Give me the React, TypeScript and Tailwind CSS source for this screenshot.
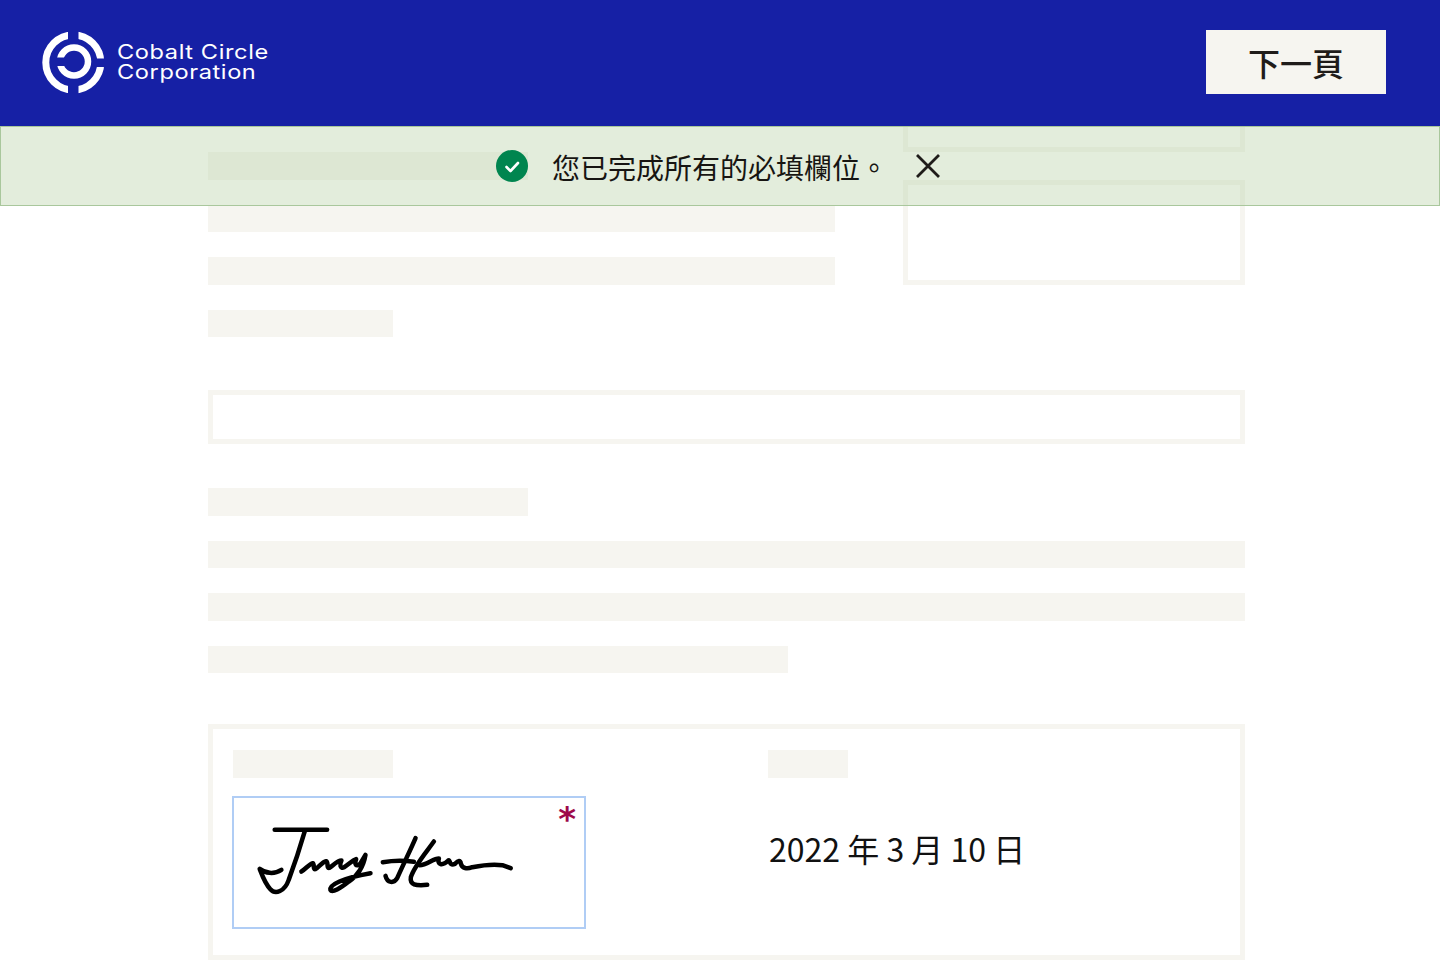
const cjk = "font-['Noto_Sans_CJK_TC','Noto_Sans',sans-serif]";

function Logo() {
  return (
    <svg width="64" height="64" viewBox="0 0 64 64" fill="none" className="shrink-0">
      <circle cx="32.3" cy="32.5" r="27.5" stroke="#ffffff" strokeWidth="7" />
      <rect x="27" y="0" width="10.5" height="12" fill="#1620a5" />
      <rect x="27" y="52" width="10.5" height="12" fill="#1620a5" />
      <rect x="50" y="28.5" width="14" height="8.5" fill="#1620a5" />
      <circle cx="33" cy="31.5" r="14" stroke="#ffffff" strokeWidth="6.5" />
      <rect x="12" y="27.5" width="22" height="8.5" fill="#1620a5" />
    </svg>
  );
}

function Signature() {
  return (
    <svg width="267" height="77" viewBox="80 100 800 230" fill="none" stroke="#000000" strokeWidth="13.5" strokeLinecap="round" strokeLinejoin="round">
      <path d="M148 120 H305" />
      <path d="M238 125 C225 170 205 230 190 270 C178 305 150 315 135 298 C118 280 110 255 103 237 C120 250 145 255 168 240" />
      <path d="M228 245 C240 238 252 222 262 220 C268 222 262 240 270 238 C280 232 290 216 302 214 C310 216 302 236 312 234 C322 228 335 212 348 212 C342 224 344 238 356 232 C370 224 380 212 392 208 C386 224 392 232 404 222 L420 195 C415 225 400 255 370 275 C345 295 320 310 315 300 C312 285 350 265 435 250" />
      <path d="M472 217 C500 212 530 210 565 216" />
      <path d="M570 145 C555 180 535 220 515 265 C505 282 485 280 480 258" />
      <path d="M625 155 C600 190 565 230 556 262 C552 285 570 288 605 285" />
      <path d="M582 226 C605 226 622 206 640 206 C634 224 650 230 668 212 C674 208 670 230 688 222 C698 212 704 210 706 222 C710 236 724 238 740 232 C770 226 800 222 830 226 L855 235" />
    </svg>
  );
}

function Bar({ className }: { className: string }) {
  return <div className={`h-[27.5px] bg-[#f6f5f0] ${className}`} />;
}

export default function App() {
  return (
    <div className={`relative h-[960px] overflow-hidden bg-white ${cjk}`}>
      <header className="flex h-[126px] items-center justify-between bg-[#1620a5] pb-0.5 pl-[41px] pr-[54px]">
        <div className="flex items-center gap-3">
          <Logo />
          <div className="mb-px origin-left scale-x-[1.18] font-['Inter',sans-serif] text-[20px] leading-[20px] tracking-[0.5px] text-white">
            <div>Cobalt Circle</div>
            <div>Corporation</div>
          </div>
        </div>
        <button className="flex h-16 w-[180px] items-center justify-center bg-[#f6f5f0] text-[32px] font-medium text-[#1f1c1a]">
          下一頁
        </button>
      </header>

      {/* Success banner sits over the page */}
      <div className="absolute left-0 right-0 top-[126px] z-10 flex h-20 items-center border border-[#a9c79c] bg-[#b9d3a8]/40 pl-[495px]">
        <span className="flex h-8 w-8 items-center justify-center rounded-full bg-[#00854f]">
          <svg width="17" height="17" viewBox="0 0 17 17" fill="none" stroke="#ffffff" strokeWidth="2.6" strokeLinecap="round" strokeLinejoin="round">
            <path d="M2.5 9 L6.5 13 L14 5" />
          </svg>
        </span>
        <span className="ml-6 mt-[2px] text-[28px] leading-none text-[#171512]">您已完成所有的必填欄位。</span>
        <svg className="ml-[26px]" width="28" height="28" viewBox="0 0 28 28" fill="none" stroke="#1f1c1a" strokeWidth="2.8">
          <path d="M3 3 L25 25 M25 3 L3 25" />
        </svg>
      </div>

      <main className="ml-[208px] w-[1037px]">
        <div className="flex justify-between">
          <div className="flex w-[627px] flex-col gap-[25px] pt-[26px]">
            <Bar className="w-[320px]" />
            <Bar className="w-full" />
            <Bar className="w-full" />
            <Bar className="w-[185px]" />
          </div>
          <div className="flex w-[342px] flex-col gap-7">
            <div className="h-[26px] border-x-[5px] border-b-[5px] border-[#f6f5f0]" />
            <div className="h-[105px] border-[5px] border-[#f6f5f0]" />
          </div>
        </div>

        <div className="mt-[53px] h-[54px] border-[5px] border-[#f6f5f0]" />

        <div className="mt-[44px] flex flex-col gap-[25px]">
          <Bar className="w-[320px]" />
          <Bar className="w-full" />
          <Bar className="w-full" />
          <Bar className="w-[580px]" />
        </div>

        <div className="mt-[51px] flex h-[236px] border-[5px] border-[#f6f5f0] pl-5 pt-[21px]">
          <div className="w-[535px]">
            <Bar className="w-40" />
            <div className="relative -ml-px mt-[18.5px] h-[133px] w-[354px] border-2 border-[#b0cdf5] pl-[18px] pt-[25px]">
              <Signature />
              <span className="absolute right-2 top-px font-['DejaVu_Sans',sans-serif] text-[34px] font-bold leading-[40px] text-[#9e0a4b]">*</span>
            </div>
          </div>
          <div>
            <Bar className="w-20" />
            <div className="mt-[47.5px] pl-px text-[32px] leading-[46px] text-[#111111]">2022 年 3 月 10 日</div>
          </div>
        </div>
      </main>
    </div>
  );
}
